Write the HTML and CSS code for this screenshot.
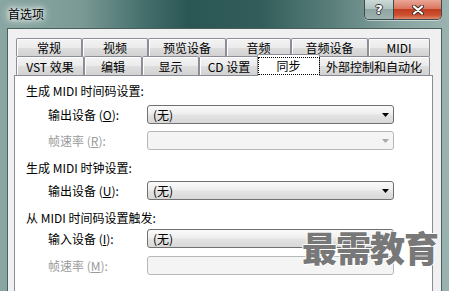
FILE: index.html
```html
<!DOCTYPE html>
<html lang="zh-CN">
<head>
  <meta charset="UTF-8">
  <title>首选项</title>
  <link rel="stylesheet" href="styles.css">
</head>
<body>
  <div class="titlebar">
    <span class="title">首选项</span>
    <div class="caption-buttons">
      <div class="cap-btn help">?</div>
      <div class="cap-btn close">
        <svg width="12" height="10" viewBox="0 0 12 10">
          <path d="M2 1.5 L10 8.5 M10 1.5 L2 8.5" stroke="#3b2a26" stroke-width="4" stroke-linecap="round"/>
          <path d="M2 1.5 L10 8.5 M10 1.5 L2 8.5" stroke="#fff" stroke-width="2.2" stroke-linecap="round"/>
        </svg>
      </div>
    </div>
  </div>

  <div class="client">
    <div class="tabs">
      <div class="tab-row row-top">
        <div class="tab">常规</div>
        <div class="tab">视频</div>
        <div class="tab">预览设备</div>
        <div class="tab">音频</div>
        <div class="tab">音频设备</div>
        <div class="tab">MIDI</div>
      </div>
      <div class="tab-row row-bottom">
        <div class="tab">VST 效果</div>
        <div class="tab">编辑</div>
        <div class="tab">显示</div>
        <div class="tab">CD 设置</div>
        <div class="tab active"><span class="focus">同步</span></div>
        <div class="tab">外部控制和自动化</div>
      </div>
    </div>

    <div class="panel">
      <div class="group-title">生成 MIDI 时间码设置:</div>
      <div class="field gap-a">
        <label>输出设备 (<u>O</u>):</label>
        <div class="combo">
          <span>(无)</span>
          <svg class="arrow" width="7" height="4" viewBox="0 0 7 4"><path d="M0 0 H7 L3.5 4 Z" fill="#000"/></svg>
        </div>
      </div>
      <div class="field disabled gap-b">
        <label>帧速率 (<u>R</u>):</label>
        <div class="combo">
          <span></span>
          <svg class="arrow" width="7" height="4" viewBox="0 0 7 4"><path d="M0 0 H7 L3.5 4 Z" fill="#a8a8a8"/></svg>
        </div>
      </div>

      <div class="group-title gap-c">生成 MIDI 时钟设置:</div>
      <div class="field gap-d">
        <label>输出设备 (<u>U</u>):</label>
        <div class="combo">
          <span>(无)</span>
          <svg class="arrow" width="7" height="4" viewBox="0 0 7 4"><path d="M0 0 H7 L3.5 4 Z" fill="#000"/></svg>
        </div>
      </div>

      <div class="group-title gap-c">从 MIDI 时间码设置触发:</div>
      <div class="field gap-e">
        <label>输入设备 (<u>I</u>):</label>
        <div class="combo">
          <span>(无)</span>
        </div>
      </div>
      <div class="field disabled gap-f">
        <label>帧速率 (<u>M</u>):</label>
        <div class="combo">
          <span></span>
        </div>
      </div>
    </div>
  </div>

  <div class="watermark">最需教育</div>
</body>
</html>
```

FILE: styles.css
```css
body {
  margin: 0;
  width: 449px;
  height: 291px;
  overflow: hidden;
  position: relative;
  font-family: "Noto Sans CJK SC", sans-serif;
  font-size: 12px;
  color: #000;
  background: linear-gradient(90deg, #8aa6a3 0%, #7b9a96 18%, #456f6c 32%, #2a5654 42%, #325d5a 58%, #5a7f7b 74%, #86a3a0 88%, #9ab3b0 100%);
}

.titlebar {
  height: 28px;
  display: flex;
  justify-content: space-between;
  align-items: flex-start;
}
.title {
  padding-left: 8px;
  line-height: 28px;
  text-shadow: 0 0 4px #fff, 0 0 8px #fff, 0 0 10px #e9f0ef;
}
.caption-buttons {
  display: flex;
  height: 19px;
  margin-right: 7px;
  border: 1px solid #3a4c4b;
  border-top: none;
  border-radius: 0 0 5px 5px;
  overflow: hidden;
  box-shadow: 0 1px 0 rgba(255, 255, 255, 0.5);
}
.cap-btn {
  display: flex;
  align-items: center;
  justify-content: center;
}
.help {
  width: 28px;
  border-right: 1px solid #3a4c4b;
  font-family: "DejaVu Sans", sans-serif;
  font-weight: bold;
  font-size: 13px;
  color: #fff;
  text-shadow: 1px 0 #333, -1px 0 #333, 0 1px #333, 0 -1px #333;
  background: linear-gradient(#cdd9d7, #b0c2c0 45%, #8ea5a2 50%, #9fb3b0 100%);
}
.close {
  width: 47px;
  background: linear-gradient(#eaa797, #d9775f 45%, #c23c20 50%, #cd5232 80%, #df8a6c 100%);
}

.client {
  margin: 0 7px;
  height: 262px;
  border: 1px solid #48605e;
  border-bottom: none;
  background: #f0f0f0;
  overflow: hidden;
}

.tabs {
  padding: 9px 0 0 8px;
}
.tab-row {
  display: grid;
  width: 414px;
}
.row-top {
  grid-template-columns: 66px 66px 78px 65px 77px 62px;
  height: 18px;
}
.row-bottom {
  grid-template-columns: 68px 58px 57px 60px 59px 112px;
  height: 19px;
}
.tab {
  box-sizing: border-box;
  border: 1px solid #8b8e96;
  border-bottom: none;
  border-radius: 2px 2px 0 0;
  box-shadow: inset 1px 1px 0 #fff;
  background: linear-gradient(#f3f3f3, #ebebeb 50%, #dedede 50%, #d2d2d2);
  display: flex;
  align-items: center;
  justify-content: center;
  white-space: nowrap;
}
.tab.active {
  position: relative;
  z-index: 1;
  margin: -2px -2px -1px;
  background: #fff;
  box-shadow: none;
}
.focus {
  border: 1px dotted #000;
  padding: 0 18px;
  line-height: 16px;
}

.panel {
  margin: 0 8px 0 6px;
  height: 208px;
  border: 1px solid #898c95;
  border-bottom: none;
  background: #fff;
  padding: 7px 0 0 11px;
}
.group-title {
  line-height: 16px;
}
.field {
  display: grid;
  grid-template-columns: 99px 247px;
  align-items: center;
  margin-left: 22px;
}
.field u {
  text-decoration: underline;
}
.combo {
  box-sizing: border-box;
  height: 19px;
  border: 1px solid #707070;
  border-radius: 3px;
  background: linear-gradient(#fafafa, #efefef 45%, #e3e3e3 55%, #d8d8d8);
  display: flex;
  align-items: center;
  justify-content: space-between;
  padding: 0 4px 0 5px;
}
.disabled label {
  color: #9a9a9a;
}
.disabled .combo {
  border-color: #b4b8bb;
  background: #f4f4f4;
}

.gap-a { margin-top: 6px; }
.gap-b { margin-top: 7px; }
.gap-c { margin-top: 10px; }
.gap-d { margin-top: 5px; }
.gap-e { margin-top: 3px; }
.gap-f { margin-top: 8px; }

.watermark {
  position: absolute;
  left: 302px;
  top: 227px;
  font-size: 35px;
  font-weight: 900;
  line-height: 40px;
  color: #787878;
  letter-spacing: -1px;
  text-shadow: 1px 0 #fff, -1px 0 #fff, 0 1px #fff, 0 -1px #fff;
}
```
